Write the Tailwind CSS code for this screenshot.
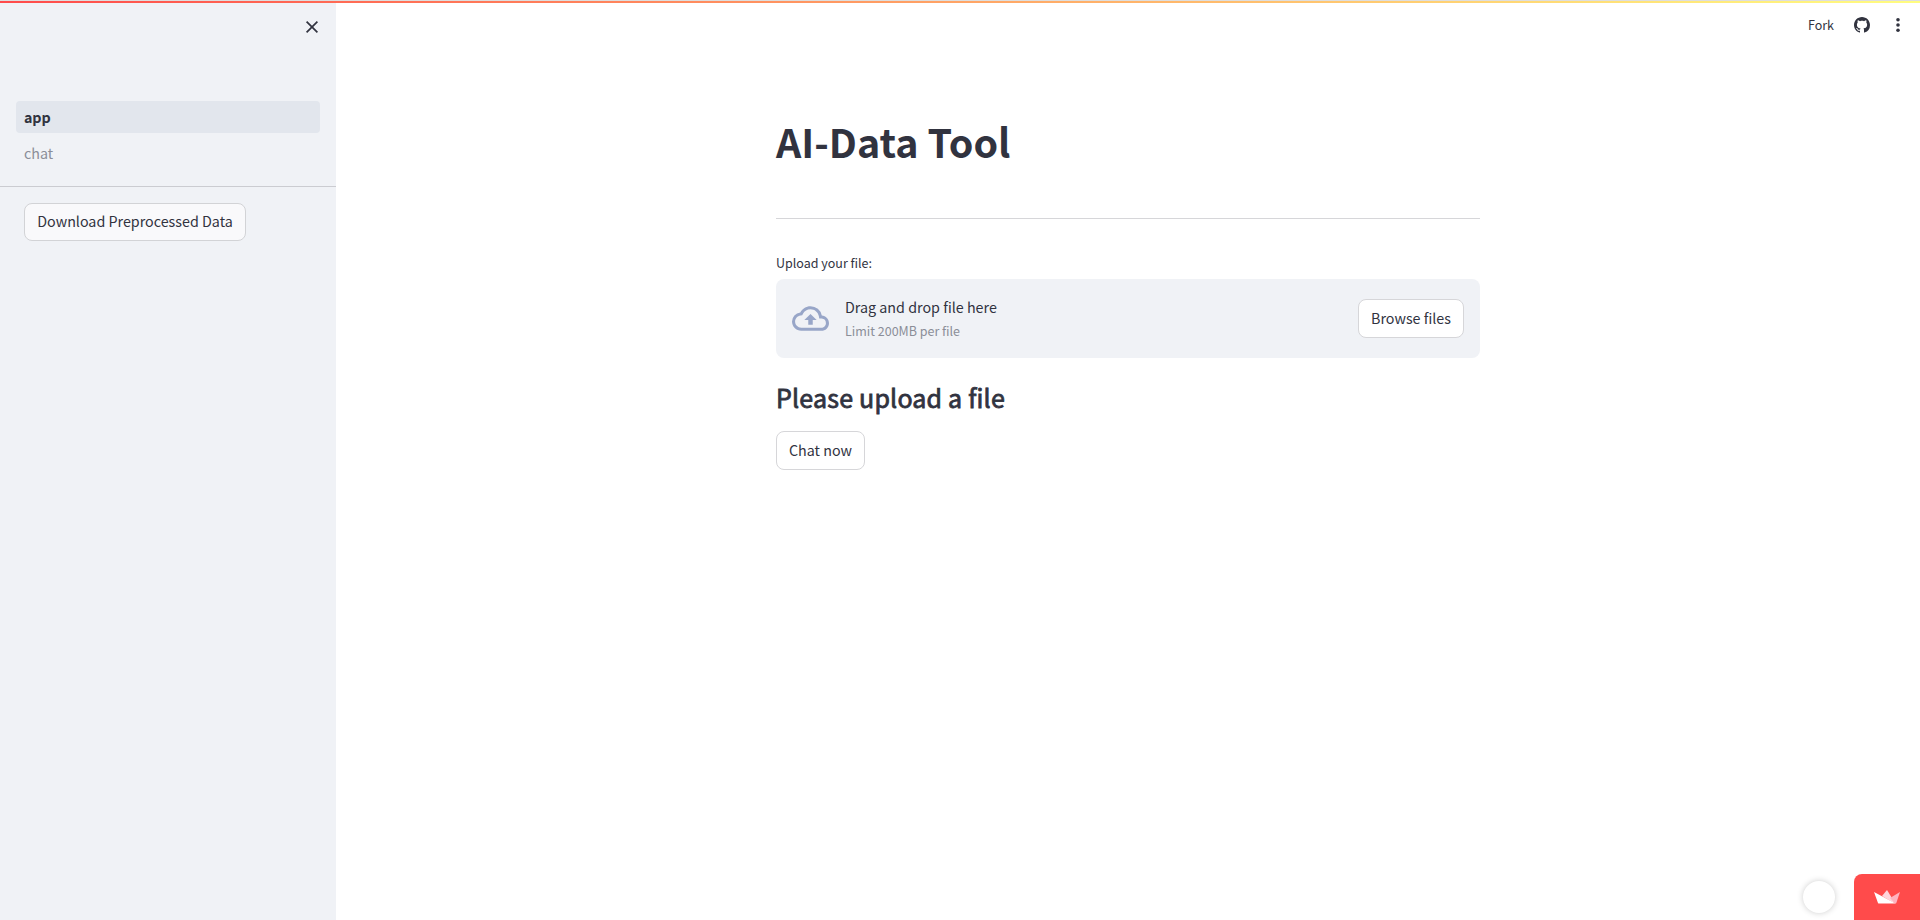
<!DOCTYPE html>
<html lang="en">
<head>
<meta charset="utf-8">
<title>AI-Data Tool</title>
<script src="https://cdn.jsdelivr.net/npm/@tailwindcss/browser@4"></script>
</head>
<body class="h-[920px] overflow-hidden bg-white text-[#31333f] font-['Source_Sans_Pro','Noto_Sans_CJK_SC',sans-serif] text-[14.3px] leading-6">
<div class="relative flex h-[920px]">
  <div class="absolute inset-x-0 top-0 h-[3px] border-t border-[#dedede] bg-linear-to-r/srgb from-[#ff4b4b] to-[#fffd80]"></div>

  <aside class="flex w-[336px] shrink-0 flex-col bg-[#f0f2f6]">
    <div class="flex h-[101px] justify-end pt-[19px] pr-[16px]">
      <svg class="h-4 w-4" viewBox="0 0 16 16" fill="none" stroke="#31333f" stroke-width="1.7"><path d="M2.6 2.6 13.4 13.4M13.4 2.6 2.6 13.4"/></svg>
    </div>
    <nav class="flex flex-col gap-1 px-4">
      <a class="flex h-8 items-center rounded bg-[#e2e6ed] px-2 font-bold tracking-[-0.1px]">app</a>
      <a class="flex h-8 items-center rounded px-2 text-[#8b8e98]">chat</a>
    </nav>
    <div class="mt-[17px] h-px bg-[#cbccd1]"></div>
    <div class="px-6 pt-4">
      <button class="flex h-[38px] w-[222px] items-center justify-center rounded-lg border border-[#d2d3d6] bg-[#f9f9fb] pb-[2px] whitespace-nowrap">Download Preprocessed Data</button>
    </div>
  </aside>

  <main class="flex grow flex-col">
    <header class="flex h-[50px] items-center justify-end pr-[14px] text-[12.5px]">
      <span class="mr-[20px]">Fork</span>
      <svg class="mr-[20px] h-4 w-4" viewBox="0 0 16 16" fill="#31333f"><path d="M8 0C3.58 0 0 3.58 0 8c0 3.54 2.29 6.53 5.47 7.59.4.07.55-.17.55-.38 0-.19-.01-.82-.01-1.49-2.01.37-2.53-.49-2.69-.94-.09-.23-.48-.94-.82-1.13-.28-.15-.68-.52-.01-.53.63-.01 1.08.58 1.23.82.72 1.21 1.87.87 2.33.66.07-.52.28-.87.51-1.07-1.78-.2-3.64-.89-3.64-3.95 0-.87.31-1.59.82-2.15-.08-.2-.36-1.02.08-2.12 0 0 .67-.21 2.2.82.64-.18 1.32-.27 2-.27s1.36.09 2 .27c1.53-1.04 2.2-.82 2.2-.82.44 1.1.16 1.92.08 2.12.51.56.82 1.27.82 2.15 0 3.07-1.87 3.75-3.65 3.95.29.25.54.73.54 1.48 0 1.07-.01 1.93-.01 2.2 0 .21.15.46.55.38A8.01 8.01 0 0 0 16 8c0-4.42-3.58-8-8-8z"/></svg>
      <svg class="h-4 w-4" viewBox="0 0 16 16" fill="#31333f"><circle cx="8" cy="2.8" r="1.8"/><circle cx="8" cy="8" r="1.8"/><circle cx="8" cy="13.2" r="1.8"/></svg>
    </header>

    <section class="ml-[440px] flex w-[704px] flex-col items-start">
      <h1 class="mt-[64px] h-[53px] text-[39.4px] leading-[53px] font-bold whitespace-nowrap">AI-Data Tool</h1>
      <div class="mt-[51px] h-px w-full bg-[#d6d6d9]"></div>
      <div class="mt-[32px] h-6 text-[12.5px]">Upload your file:</div>
      <div class="mt-[4px] flex h-[79px] w-full items-center rounded-lg bg-[#f0f2f6] px-4">
        <svg class="mr-4 mb-px h-[37px] w-[37px]" viewBox="0 0 24 24" fill="#98a6c8"><path d="M19.35 10.04A7.49 7.49 0 0 0 12 4C9.11 4 6.6 5.64 5.35 8.04A5.994 5.994 0 0 0 0 14c0 3.31 2.69 6 6 6h13c2.76 0 5-2.24 5-5 0-2.64-2.05-4.78-4.65-4.96zM19 18H6c-2.21 0-4-1.79-4-4 0-2.05 1.53-3.76 3.56-3.97l1.07-.11.5-.95A5.469 5.469 0 0 1 12 6c2.62 0 4.88 1.86 5.39 4.43l.3 1.5 1.53.11A2.98 2.98 0 0 1 22 15c0 1.65-1.35 3-3 3zM8 13h2.55v3h2.9v-3H16l-4-4z"/></svg>
        <div class="flex grow flex-col">
          <span>Drag and drop file here</span>
          <span class="text-[12.5px] text-[#8b8e98]">Limit 200MB per file</span>
        </div>
        <button class="flex h-[39px] w-[106px] items-center justify-center rounded-lg border border-[#d6d6d9] bg-white pb-[2px]">Browse files</button>
      </div>
      <h3 class="mt-[22px] h-[34px] text-[25px] leading-[34px] font-normal tracking-[0.2px] whitespace-nowrap [-webkit-text-stroke:0.8px_#31333f]">Please upload a file</h3>
      <button class="mt-[17px] flex h-[39px] w-[89px] items-center justify-center rounded-lg border border-[#d6d6d9] bg-white pb-[2px]">Chat now</button>
    </section>

    <footer class="mt-auto flex items-end justify-end">
      <div class="mr-[19px] mb-[7px] h-8 w-8 rounded-full bg-white shadow-[0_0_6px_rgba(0,0,0,0.2)]"></div>
      <div class="flex h-[46px] w-[66px] items-center justify-center rounded-tl-lg bg-[#ff4b4b]">
        <svg class="h-[14px] w-[26px]" viewBox="0 0 26 14"><path d="M13 0 8 6 18 12 21 13z" fill="#ffd5dc"/><path d="M26 2 16 8 21 13.5Q22 13.500 22.300 13z" fill="#ffb3c0"/><path d="M0 2 21.500 13.500H5Q4.200 13.500 4 13z" fill="#fff"/></svg>
      </div>
    </footer>
  </main>
</div>
</body>
</html>
